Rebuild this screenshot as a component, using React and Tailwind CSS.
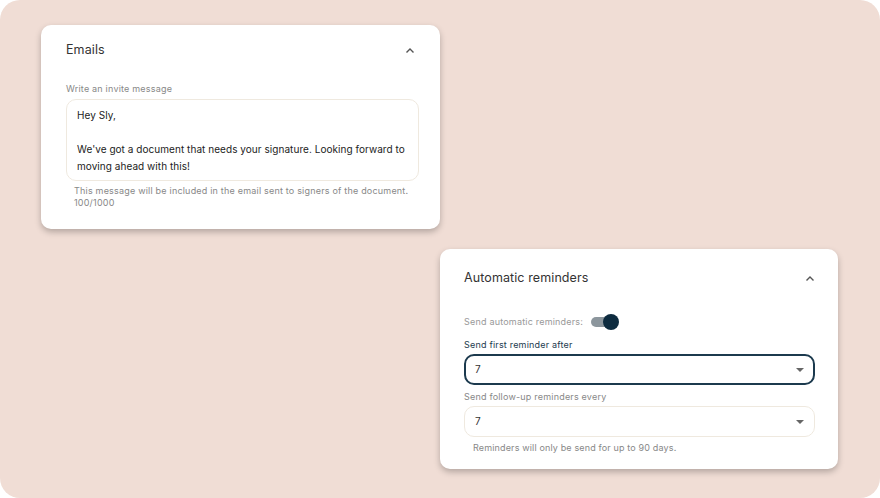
import React from 'react';

function Chevron() {
  return (
    <svg width="12" height="12" viewBox="0 0 12 12" className="text-[#555]">
      <path d="M2.5 7.5 6 4l3.5 3.5" fill="none" stroke="currentColor" strokeWidth="1.4" />
    </svg>
  );
}

function Caret() {
  return (
    <svg width="10" height="6" viewBox="0 0 10 6" className="text-[#666]">
      <path d="M1 1h8L5 5z" fill="currentColor" />
    </svg>
  );
}

export default function App() {
  return (
    <div className="w-[880px] h-[498px] bg-white" style={{ fontFamily: 'Inter, "Noto Sans", sans-serif' }}>
      <div className="w-full h-full bg-[#f0ddd5] rounded-[20px] relative overflow-hidden">
        {/* Emails card */}
        <div className="absolute left-[41px] top-[25px] w-[399px] h-[204px] bg-white rounded-[10px] shadow-[0_3px_6px_rgba(0,0,0,0.25)] px-[25px]">
          <div className="flex items-center justify-between h-[50px] pt-[1px]">
            <span className="text-[12.5px] tracking-[0.1px] text-[#333]">Emails</span>
            <span className="mr-[-1px]"><Chevron /></span>
          </div>
          <div className="mt-[8px] text-[9px] tracking-[0.2px] text-[#888] leading-[12px]">Write an invite message</div>
          <div className="mt-[4px] w-[353px] h-[82px] border border-[#efe9df] rounded-[10px] pl-[10px] pr-[4px] pt-[7px] text-[10px] tracking-[0.05px] leading-[17px] text-[#222]">
            <div>Hey Sly,</div>
            <div className="h-[17px]" />
            <div>We've got a document that needs your signature. Looking forward to moving ahead with this!</div>
          </div>
          <div className="pl-[8px] mt-[4px] text-[9px] tracking-[0.2px] leading-[12px] text-[#888]">
            <div>This message will be included in the email sent to signers of the document.</div>
            <div>100/1000</div>
          </div>
        </div>

        {/* Automatic reminders card */}
        <div className="absolute left-[440px] top-[249px] w-[398px] h-[220px] bg-white rounded-[10px] shadow-[0_3px_6px_rgba(0,0,0,0.25)] px-[24px]">
          <div className="flex items-center justify-between h-[59px]">
            <span className="text-[12.5px] tracking-[0.1px] text-[#333]">Automatic reminders</span>
            <span className="mr-[-2px]"><Chevron /></span>
          </div>
          <div className="mt-[5px] flex items-center gap-[8px] h-[18px]">
            <span className="text-[9px] tracking-[0.2px] text-[#999]">Send automatic reminders:</span>
            <div className="relative w-[28px] h-[16px] flex items-center">
              <div className="w-[24px] h-[10px] rounded-full bg-[#8c969d]" />
              <div className="absolute right-0 top-0 w-[16px] h-[16px] rounded-full bg-[#0d2b3f]" />
            </div>
          </div>
          <div className="mt-[8px] text-[9px] tracking-[0.2px] leading-[12px] text-[#1c3a4e]">Send first reminder after</div>
          <div className="mt-[3px] h-[31px] w-[351px] border-2 border-[#1c3a4e] rounded-[10px] flex items-center justify-between pl-[9px] pr-[8px]">
            <span className="text-[10px] text-[#333]">7</span>
            <Caret />
          </div>
          <div className="mt-[6px] text-[9px] tracking-[0.2px] leading-[12px] text-[#888]">Send follow-up reminders every</div>
          <div className="mt-[3px] h-[31px] w-[351px] border border-[#efe9df] rounded-[10px] flex items-center justify-between pl-[10px] pr-[9px]">
            <span className="text-[10px] text-[#333]">7</span>
            <Caret />
          </div>
          <div className="pl-[9px] mt-[5px] text-[9px] tracking-[0.15px] leading-[12px] text-[#888]">Reminders will only be send for up to 90 days.</div>
        </div>
      </div>
    </div>
  );
}
